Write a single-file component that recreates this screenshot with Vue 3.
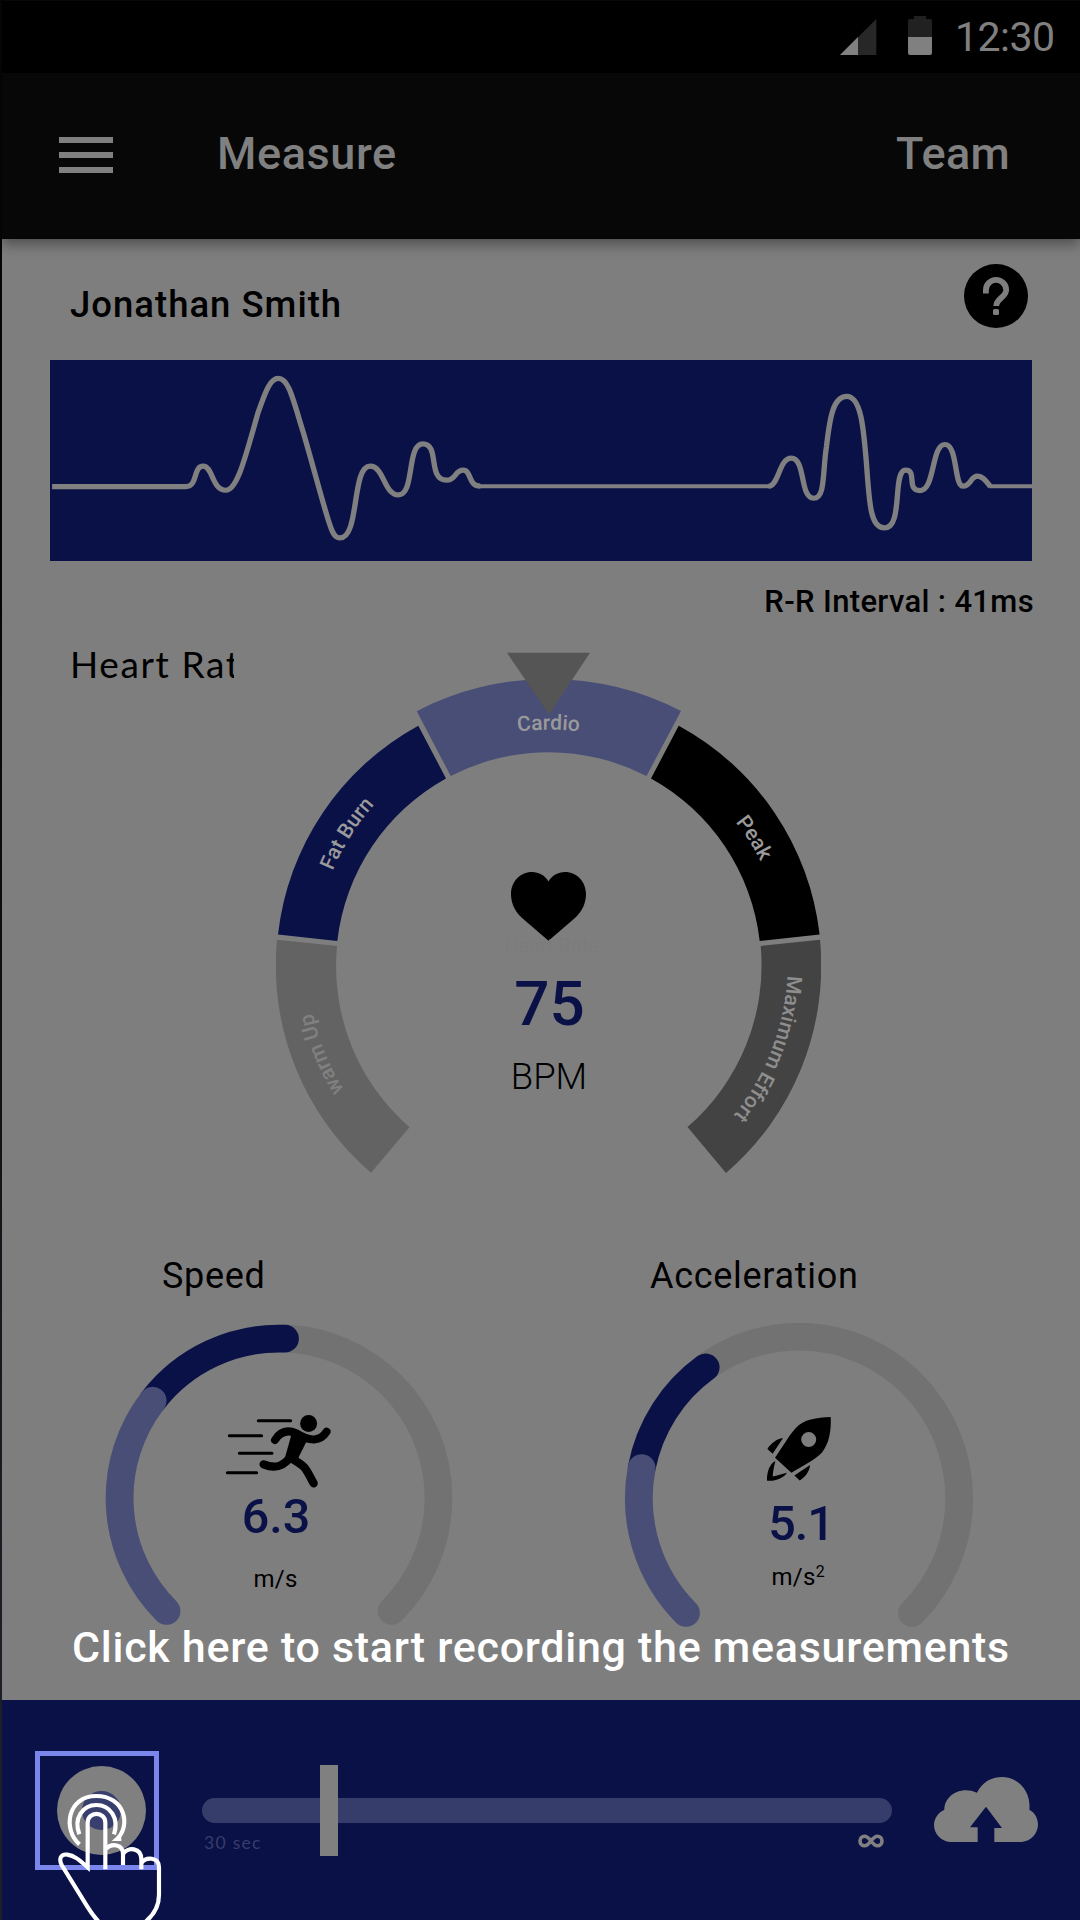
<script setup>
const zones = [
  { id: 'warm', fill: '#636363', d: 'M371 1172.8A273 273 0 0 1 277 939.7L337 946A213.500 213.500 0 0 0 409.5 1127.3Z' },
  { id: 'fat', fill: '#0a1147', d: 'M278 934.6A273 273 0 0 1 418.3 725.7L446 778.5A213.500 213.500 0 0 0 337.3 941Z' },
  { id: 'cardio', fill: '#484e76', d: 'M416.8 711.2A287 287 0 0 1 681 711L646.5 776A213.500 213.500 0 0 0 450.7 776Z' },
  { id: 'peak', fill: '#000', d: 'M678.7 725.7A273 273 0 0 1 819.6 934.6L759.7 941A213.500 213.500 0 0 0 651 778.5Z' },
  { id: 'max', fill: '#434343', d: 'M820 939.7A273 273 0 0 1 726 1173L687.5 1127A213.500 213.500 0 0 0 760.7 946Z' },
]
</script>

<template>
  <div class="screen">
    <div class="status">
      <svg class="signal" width="37" height="36" viewBox="0 0 37 36">
        <path d="M0 36L36.300 0V36Z" fill="#272727" />
        <path d="M0 36L18 18V36Z" fill="#808080" />
      </svg>
      <svg class="battery" width="24" height="39" viewBox="0 0 24 39">
        <path d="M6 0H18V3H22Q24 3 24 5V21H0V5Q0 3 2 3H6Z" fill="#212121" />
        <path d="M0 21H24V37Q24 39 22 39H2Q0 39 0 37Z" fill="#808080" />
      </svg>
      <span class="clock">12:30</span>
    </div>

    <header class="bar">
      <div class="menu"><i></i><i></i><i></i></div>
      <span class="title">Measure</span>
      <span class="team">Team</span>
    </header>

    <main class="content">
      <div class="user">
        <span class="name">Jonathan Smith</span>
        <svg class="help" width="64" height="64" viewBox="0 0 64 64">
          <circle cx="32" cy="32" r="32" fill="#000" />
          <path d="M21.900 29.500V26A10.100 10.100 0 0 1 42.200 26C42.200 33 32.200 34.500 32.200 42" fill="none" stroke="#7e7e7e" stroke-width="5.800" />
          <rect x="29" y="45" width="6" height="6" rx="1.500" fill="#7e7e7e" />
        </svg>
      </div>

      <div class="ecg">
        <svg width="982" height="201" viewBox="145 60 2852 602" preserveAspectRatio="none" fill="none" stroke="#808080" stroke-width="15.500">
          <path d="M151 439H540C575 439 560 378 590 378C618 378 615 450 656 450C690 450 715 340 750 215C768 165 782 115 808 115C838 115 850 175 880 275C910 380 945 520 960 560C968 584 975 593 987 593C1045 593 1020 378 1075 378C1115 378 1115 464 1157 464C1205 464 1180 311 1228 311C1278 311 1240 420 1297 420C1325 420 1320 390 1345 390C1370 390 1358 438 1395 438" />
          <path d="M1393 438H2238" stroke-width="12" />
          <path d="M2232 438C2262 438 2262 354 2298 354C2340 354 2322 474 2363 474C2397 474 2388 400 2400 320C2410 230 2420 169 2459 169C2500 169 2508 260 2517 380C2525 500 2530 563 2568 563C2625 563 2590 390 2630 390C2665 390 2630 451 2672 451C2715 451 2705 313 2744 313C2782 313 2770 438 2797 438C2820 438 2818 408 2839 408C2855 408 2865 425 2876 439" />
          <path d="M2873 438H2997" stroke-width="12" />
        </svg>
      </div>

      <div class="interval">R-R Interval : 41ms</div>

      <section class="heart">
        <div class="label">Heart Rate</div>
        <svg width="545" height="530" viewBox="276 651 545 530">
          <defs>
            <path id="arc-warm" d="M344 1090A241 241 0 0 1 308 945" />
            <path id="arc-fat" d="M332.500 871A237 237 0 0 1 400 780" />
            <path id="arc-cardio" d="M448.500 751.500A240 240 0 0 1 648.500 751.500" />
            <path id="arc-peak" d="M735.500 822A237 237 0 0 1 780 915" />
            <path id="arc-max" d="M787.200 975.500A239 239 0 0 1 716 1134.500" />
          </defs>
          <path v-for="z in zones" :key="z.id" :d="z.d" :fill="z.fill" />
          <path d="M507 652.800H590L549 714.800Z" fill="#555" />
          <g class="zone">
            <text fill="#808080"><textPath href="#arc-warm">warm Up</textPath></text>
            <text fill="#9a9a9a"><textPath href="#arc-fat">Fat Burn</textPath></text>
            <text fill="#9a9a9a" text-anchor="middle"><textPath href="#arc-cardio" startOffset="50%">Cardio</textPath></text>
            <text fill="#9a9a9a"><textPath href="#arc-peak">Peak</textPath></text>
            <text fill="#8e8e8e"><textPath href="#arc-max">Maximum Effort</textPath></text>
          </g>
          <path d="M548.500 940.800L521.500 917.500C514 910.500 511 902 511 894C511 882 520 872 532 872C539 872 545 875.500 548.500 881.500C552 875.500 558 872 565 872C577 872 586 882 586 894C586 902 583 910.500 575.500 917.500Z" fill="#000" />
          <text class="ghost" x="551.500" y="953" text-anchor="middle">Heart Rate</text>
          <text class="bpm" x="549.500" y="1024.500" text-anchor="middle">75</text>
          <text class="unit" x="549" y="1089.300" text-anchor="middle">BPM</text>
        </svg>
      </section>

      <section class="metrics">
        <div class="metric speed">
          <h3>Speed</h3>
          <svg width="348" height="305" viewBox="105 1323 348 305">
            <g fill="none" stroke-width="27.700" stroke-linecap="round">
              <path d="M166.500 1611A159.500 159.500 0 1 1 391.500 1611" stroke="#727272" />
              <path d="M152.700 1400.700A159.500 159.500 0 0 1 285 1338.700" stroke="#0a1147" />
              <path d="M166.500 1611A159.500 159.500 0 0 1 152.700 1400.700" stroke="#484e76" />
            </g>
            <svg x="223.300" y="1411.700" width="110" height="78.300" viewBox="430 515 330 235">
              <g fill="none" stroke="#000" stroke-linecap="round" stroke-linejoin="round">
                <path d="M535 542H632M448 587H545M478 639.500H576M442 698H530" stroke-width="9" />
                <path d="M585 600C600 575 622 568 650 580C690 606 722 604 740 575" stroke-width="24" />
                <path d="M551 673C588 688 612 678 632 650" stroke-width="25" />
                <path d="M634 655C682 682 676 685 701 730" stroke-width="25" />
              </g>
              <path d="M636 578L683 598L652 660L612 664Z" fill="#000" />
              <circle cx="686" cy="550.500" r="25.500" fill="#000" />
            </svg>
            <text class="value" x="276" y="1533" text-anchor="middle">6.3</text>
            <text class="small" x="275.500" y="1587.300" text-anchor="middle">m/s</text>
          </svg>
        </div>
        <div class="metric accel">
          <h3>Acceleration</h3>
          <svg width="350" height="305" viewBox="624 1323 350 305">
            <g fill="none" stroke-width="27.700" stroke-linecap="round">
              <path d="M686 1613A160.200 161.700 0 1 1 912 1613" stroke="#727272" />
              <path d="M641.700 1468A160.200 161.700 0 0 1 705.700 1367.300" stroke="#0a1147" />
              <path d="M686 1613A160.200 161.700 0 0 1 641.700 1468" stroke="#484e76" />
            </g>
            <svg x="766.700" y="1416.700" width="65" height="64.700" viewBox="500 530 195 194">
              <path fill-rule="evenodd" d="M692 531C650 532 610 539 588 563C568 584 545 625 525 653L574 698C602 680 645 660 666 637C688 610 694 570 692 531ZM626 576A22.500 22.500 0 1 1 626 621A22.500 22.500 0 1 1 626 576Z" />
              <path d="M502 627C513 609 530 597 549 594L518 641ZM599 721C617 710 628 695 630 675L583 706ZM526 663C509 672 500 695 501 722C528 724 551 713 561 698C545 702 532 707 518 709C519 692 522 680 526 663Z" />
            </svg>
            <text class="value tight" x="801" y="1540" text-anchor="middle">5.1</text>
            <text class="small" x="771.500" y="1585.300">m/s<tspan class="sup" dy="-8">2</tspan></text>
          </svg>
        </div>
      </section>

      <p class="hint">Click here to start recording the measurements</p>
    </main>

    <footer class="record">
      <div class="target">
        <div class="rec"><i></i></div>
        <svg class="hand" width="110" height="130" viewBox="170 570 330 390" fill="none" stroke="#fff" stroke-width="12.500">
          <path d="M240.500 733C190 690 203 588 291 588C376 588 396 677 353 717H366" />
          <path d="M240 703C222 655 250 615 291 615C333 615 360 655 344 703" />
          <path d="M318 808V668C318 633 265 633 265 668V802C240 780 226 767 204 764C184 761 178 777 187 795L264 920C280 946 293 961 305 972" />
          <path d="M320 746C337 729 371 732 371 762V795M372 761C385 740 426 742 426 778V808M427 788C440 770 479 770 479 802V884C479 920 465 943 440 964" />
        </svg>
      </div>
      <div class="slider">
        <div class="track"></div>
        <div class="ends">
          <span>30 sec</span>
          <svg width="26" height="14" viewBox="0 0 26 14" fill="none" stroke="#808080" stroke-width="3.600">
            <path d="M13 7C10 3 9 2.200 6.600 2.200A4.600 4.800 0 0 0 6.600 11.800C9 11.800 10 11 13 7C16 3 17 2.200 19.400 2.200A4.600 4.800 0 0 1 19.400 11.800C17 11.800 16 11 13 7Z" />
          </svg>
        </div>
        <div class="handle"></div>
      </div>
      <svg class="cloud" width="104" height="65" viewBox="702 261 312 195">
        <path fill="#808080" d="M750 456C724 454 702 432 702 405C702 385 715 367 733 359C733 315 784 286 831 308C846 278 873 261 906 261C957 261 994 307 988 359C1004 367 1014 385 1014 403C1014 431 993 454 965 456H883V414H906L858 350L810 412H833V456Z" />
      </svg>
    </footer>
  </div>
</template>

<style>
body {
  margin: 0;
}
</style>

<style scoped>
.screen {
  box-sizing: border-box;
  width: 1080px;
  height: 1920px;
  padding-left: 2px;
  display: flex;
  flex-direction: column;
  overflow: hidden;
  background: linear-gradient(#050505, #050507 30%, #1c2026 85%);
  font-family: Roboto, "Liberation Sans", sans-serif;
  color: #000;
}
.status {
  box-sizing: border-box;
  height: 73px;
  flex: none;
  border-top: 1px solid #070707;
  background: #000;
  display: flex;
  justify-content: flex-end;
  align-items: flex-start;
  padding-right: 26px;
  color: #808080;
}
.signal {
  margin: 18px 31px 0 0;
}
.battery {
  margin: 15px 23px 0 0;
}
.clock {
  font-size: 41px;
  line-height: 48px;
  margin-top: 12px;
  width: 99px;
  letter-spacing: -0.500px;
}
.bar {
  height: 166px;
  flex: none;
  background: #070707;
  color: #808080;
  display: flex;
  align-items: center;
  box-shadow: 0 5px 13px rgba(0, 0, 0, 0.4);
  position: relative;
  z-index: 1;
}
.menu {
  width: 54px;
  margin: 0 0 2px 57px;
  display: grid;
  gap: 9px;
}
.menu i {
  height: 6px;
  background: #808080;
}
.title,
.team {
  font-size: 45px;
  font-weight: 500;
  line-height: 56px;
  margin-bottom: 4px;
  letter-spacing: 0.600px;
}
.title {
  margin-left: 104px;
}
.team {
  margin-left: auto;
  margin-right: 70px;
  letter-spacing: 0.300px;
}
.content {
  flex: 1;
  background: #7e7e7e;
}
.user {
  height: 121px;
  display: flex;
  justify-content: space-between;
  align-items: flex-start;
  padding: 0 52px 0 68px;
}
.name {
  font-size: 36.500px;
  font-weight: 500;
  line-height: 40px;
  margin-top: 46px;
  letter-spacing: 1px;
}
.help {
  margin-top: 25px;
}
.ecg {
  width: 982px;
  height: 201px;
  margin-left: 48px;
  background: #0a1147;
}
.ecg svg {
  display: block;
}
.interval {
  height: 90px;
  box-sizing: border-box;
  padding: 21px 46px 0 0;
  text-align: right;
  font-size: 31px;
  font-weight: 500;
  line-height: 40px;
  letter-spacing: 0.350px;
}
.heart {
  height: 530px;
  display: flex;
  gap: 42px;
  padding-left: 68px;
}
.label {
  width: 164px;
  height: 30px;
  overflow: hidden;
  white-space: nowrap;
  font-family: Lato, sans-serif;
  font-size: 37px;
  line-height: 26px;
  letter-spacing: 1.600px;
}
.zone {
  font-size: 21px;
  font-weight: 500;
}
.ghost {
  font-size: 20px;
  fill: #7c7c7c;
}
.bpm {
  font-size: 62px;
  font-weight: 500;
  fill: #0a1147;
}
.unit {
  font-size: 36.500px;
  font-weight: 300;
}
.metrics {
  display: flex;
  height: 446px;
  padding-left: 103px;
  gap: 171px;
}
.metric h3 {
  margin: 75px 0 27px;
  font-size: 36px;
  font-weight: 400;
  line-height: 40px;
  letter-spacing: 0.700px;
}
.metric svg {
  display: block;
}
.speed h3 {
  padding-left: 57px;
}
.accel h3 {
  padding-left: 26px;
}
.value {
  font-size: 48.500px;
  font-weight: 500;
  fill: #0a1147;
}
.tight {
  letter-spacing: -1px;
}
.small {
  font-size: 24px;
  letter-spacing: 0.300px;
}
.sup {
  font-size: 16px;
}
.hint {
  margin: 0;
  padding-left: 70px;
  white-space: nowrap;
  color: #fff;
  font-size: 43px;
  font-weight: 500;
  line-height: 40px;
  letter-spacing: 0.720px;
}
.record {
  height: 220px;
  flex: none;
  background: #0a1147;
  display: flex;
  align-items: flex-start;
}
.target {
  box-sizing: border-box;
  width: 124px;
  height: 119px;
  margin: 51px 43px 0 33px;
  border: 5px solid #7b86ec;
  display: flex;
  justify-content: center;
  align-items: center;
  position: relative;
}
.rec {
  width: 89px;
  height: 89px;
  margin-left: 9px;
  border-radius: 50%;
  background: #808080;
  display: flex;
  justify-content: center;
  align-items: center;
}
.rec i {
  width: 39px;
  height: 39px;
  border-radius: 50%;
  background: #383f6e;
}
.hand {
  position: absolute;
  left: 16px;
  top: 34px;
}
.slider {
  width: 690px;
  margin-top: 98px;
  position: relative;
}
.track {
  height: 25px;
  border-radius: 12.500px;
  background: #373d6b;
}
.ends {
  display: flex;
  justify-content: space-between;
  padding: 10px 8px 0 2px;
  font-family: Lato, sans-serif;
  font-size: 17.500px;
  line-height: 20px;
  letter-spacing: 1.300px;
  color: #373d6b;
}
.ends svg {
  margin-top: 0.500px;
}
.handle {
  position: absolute;
  left: 118px;
  top: -33px;
  width: 18px;
  height: 91px;
  background: #808080;
}
.cloud {
  margin: 77px 0 0 42px;
}
</style>
